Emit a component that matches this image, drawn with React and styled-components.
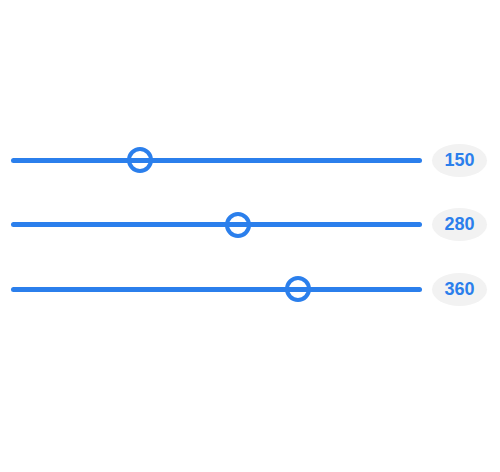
import React from 'react';
import styled, { createGlobalStyle } from 'styled-components';

const GlobalStyle = createGlobalStyle`
    body {
        margin: 0;
        background: #ffffff;
        font-family: "Liberation Sans", Arial, sans-serif;
    }
`

const BLUE = '#2b7fec'

const Page = styled.div`
    width: 500px;
    height: 472px;
    box-sizing: border-box;
    padding: 143px 13px 0 11px;
    display: flex;
    flex-direction: column;
    gap: 30.5px;
`

const Row = styled.div`
    display: flex;
    align-items: center;
    gap: 10px;
    height: 34px;
`

const Track = styled.div`
    position: relative;
    flex: 1;
    height: 5px;
    border-radius: 3px;
    background: ${BLUE};
`

const Thumb = styled.div`
    position: absolute;
    top: 50%;
    width: 26px;
    height: 26px;
    box-sizing: border-box;
    border: 4px solid ${BLUE};
    border-radius: 50%;
    transform: translate(-50%, -50%);
`

const Badge = styled.div`
    width: 55px;
    height: 33px;
    border-radius: 50%;
    background: #f2f2f2;
    color: ${BLUE};
    font-size: 18px;
    font-weight: bold;
    display: flex;
    align-items: center;
    justify-content: center;
`

const values = [150, 280, 360]

const App = () => {
    return (
        <>
            <GlobalStyle />
            <Page>
                {values.map(v => (
                    <Row key={v}>
                        <Track>
                            <Thumb style={{ left: 16 + v * 0.7538 }} />
                        </Track>
                        <Badge>{v}</Badge>
                    </Row>
                ))}
            </Page>
        </>
    )
};

export default App;
